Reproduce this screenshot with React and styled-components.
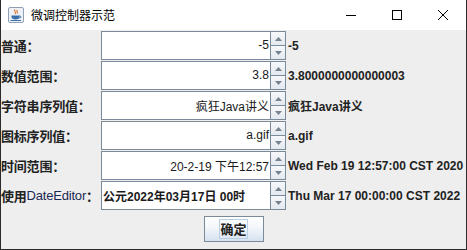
import React from 'react';
import styled, { createGlobalStyle } from 'styled-components';

const GlobalStyle = createGlobalStyle`
  html, body {
    margin: 0;
    padding: 0;
    background: #ffffff;
  }
`;

const Window = styled.div`
  width: 467px;
  height: 250px;
  box-sizing: border-box;
  border-left: 1px solid #2b2b2b;
  border-right: 1px solid #2b2b2b;
  border-bottom: 1px solid #2b2b2b;
  display: flex;
  flex-direction: column;
  font-family: "Liberation Sans", "Noto Sans CJK SC", sans-serif;
  overflow: hidden;
`;

const TitleBar = styled.div`
  height: 30px;
  flex: none;
  background: #ffffff;
  display: flex;
  align-items: center;
`;

const AppIcon = styled.div`
  width: 16px;
  height: 16px;
  margin-left: 7px;
  margin-right: 7px;
  display: flex;
`;

const TitleText = styled.div`
  flex: 1;
  font-size: 12px;
  color: #000;
  font-family: "Noto Sans CJK SC", sans-serif;
  padding-bottom: 1px;
`;

const CtrlButton = styled.div`
  width: 46px;
  height: 30px;
  display: flex;
  align-items: center;
  justify-content: center;
`;

const Content = styled.div`
  flex: 1;
  background: #eeeeee;
  padding-top: 1px;
  display: flex;
  flex-direction: column;
`;

const Form = styled.div`
  display: grid;
  grid-template-columns: 100px 185px 1fr;
  grid-auto-rows: 30px;
`;

const Label = styled.div`
  height: 29px;
  display: flex;
  align-items: center;
  font-family: "Noto Sans CJK SC", sans-serif;
  font-weight: 700;
  font-size: 13px;
  color: #222;
  white-space: nowrap;
  overflow: hidden;
  letter-spacing: -0.2px;
`;

const Latin = styled.span`
  font-family: "Liberation Sans", sans-serif;
  font-weight: 400;
  font-size: 13px;
  color: #1a2a55;
`;

const Spinner = styled.div`
  height: 29px;
  display: flex;
`;

const TextBox = styled.div`
  flex: 1;
  box-sizing: border-box;
  border: 1px solid #7a8a99;
  background: #ffffff;
  display: flex;
  align-items: center;
  justify-content: ${p => (p.$left ? 'flex-start' : 'flex-end')};
  padding: 0 1px 1px 1px;
  font-size: 12px;
  font-weight: ${p => (p.$bold ? 700 : 400)};
  font-family: "Liberation Sans", "Noto Sans CJK SC", sans-serif;
  color: #1a1a1a;
  white-space: nowrap;
`;

const Arrows = styled.div`
  width: 16px;
  margin-left: -1px;
  display: flex;
  flex-direction: column;
`;

const ArrowButton = styled.div`
  flex: 1;
  box-sizing: border-box;
  border: 1px solid #7a8a99;
  margin-top: ${p => (p.$down ? '-1px' : '0')};
  background: linear-gradient(#f6f8fb, #e3e9f0);
  display: flex;
  align-items: center;
  justify-content: center;
`;

const Value = styled.div`
  height: 29px;
  display: flex;
  align-items: center;
  padding-left: 2px;
  font-family: "Liberation Sans", "Noto Sans CJK SC", sans-serif;
  font-weight: 700;
  font-size: 12px;
  color: #222;
  white-space: nowrap;
`;

const Footer = styled.div`
  display: flex;
  justify-content: center;
  padding-top: 5px;
`;

const OkButton = styled.div`
  width: 60px;
  height: 26px;
  box-sizing: border-box;
  border: 1px solid #7a8a99;
  background: linear-gradient(#ffffff 0%, #f3f6fa 45%, #d6e2f0 100%);
  display: flex;
  align-items: center;
  justify-content: center;
`;

const FocusBox = styled.span`
  border: 1px solid #b8cfe5;
  padding: 1px 0;
  font-family: "Noto Sans CJK SC", sans-serif;
  font-weight: 700;
  font-size: 13px;
  line-height: 16px;
  color: #222;
`;

const Tri = ({ down }) => (
  <svg width="7" height="4" viewBox="0 0 7 4">
    {down ? <path d="M0 0 H7 L3.5 4 Z" fill="#76828e" /> : <path d="M0 4 H7 L3.5 0 Z" fill="#76828e" />}
  </svg>
);

const JavaIcon = () => (
  <svg width="16" height="16" viewBox="0 0 16 16">
    <rect x="0.5" y="0.5" width="15" height="15" rx="1.5" fill="#eef2f7" stroke="#8fa0b4" />
    <path d="M7 2.5 C5 4 9 5 7 7 M9 3 C8 4.5 10.5 5 9 6.5" stroke="#e07020" strokeWidth="1.1" fill="none" />
    <path d="M3.5 8.5 H11.5 V10 C11.5 11.5 10 12.5 7.5 12.5 C5 12.5 3.5 11.5 3.5 10 Z" fill="#3a6ea8" />
    <path d="M11.5 9 C13.5 9 13.5 11 11.3 11" stroke="#3a6ea8" strokeWidth="1" fill="none" />
    <path d="M2.5 13.5 H13" stroke="#3a6ea8" strokeWidth="1" />
  </svg>
);

const rows = [
  { label: '普通：', text: '-5', value: '-5' },
  { label: '数值范围：', text: '3.8', value: '3.8000000000000003' },
  { label: '字符串序列值：', text: '疯狂Java讲义', value: '疯狂Java讲义' },
  { label: '图标序列值：', text: 'a.gif', value: 'a.gif' },
  { label: '时间范围：', text: '20-2-19 下午12:57', value: 'Wed Feb 19 12:57:00 CST 2020' },
  {
    label: (
      <>
        使用<Latin>DateEditor</Latin>：
      </>
    ),
    text: '公元2022年03月17日 00时',
    value: 'Thu Mar 17 00:00:00 CST 2022',
    date: true,
  },
];

export default function App() {
  return (
    <>
      <GlobalStyle />
      <Window>
        <TitleBar>
          <AppIcon>
            <JavaIcon />
          </AppIcon>
          <TitleText>微调控制器示范</TitleText>
          <CtrlButton>
            <svg width="10" height="10" viewBox="0 0 10 10">
              <path d="M0 5.5 H10" stroke="#000" strokeWidth="1" />
            </svg>
          </CtrlButton>
          <CtrlButton>
            <svg width="10" height="10" viewBox="0 0 10 10">
              <rect x="0.5" y="0.5" width="9" height="9" fill="none" stroke="#000" strokeWidth="1" />
            </svg>
          </CtrlButton>
          <CtrlButton>
            <svg width="10" height="10" viewBox="0 0 10 10">
              <path d="M0 0 L10 10 M10 0 L0 10" stroke="#000" strokeWidth="1" />
            </svg>
          </CtrlButton>
        </TitleBar>
        <Content>
          <Form>
            {rows.map((r, i) => (
              <React.Fragment key={i}>
                <Label>{r.label}</Label>
                <Spinner>
                  <TextBox $left={r.date} $bold={r.date}>{r.text}</TextBox>
                  <Arrows>
                    <ArrowButton>
                      <Tri />
                    </ArrowButton>
                    <ArrowButton $down>
                      <Tri down />
                    </ArrowButton>
                  </Arrows>
                </Spinner>
                <Value>{r.value}</Value>
              </React.Fragment>
            ))}
          </Form>
          <Footer>
            <OkButton>
              <FocusBox>确定</FocusBox>
            </OkButton>
          </Footer>
        </Content>
      </Window>
    </>
  );
}
